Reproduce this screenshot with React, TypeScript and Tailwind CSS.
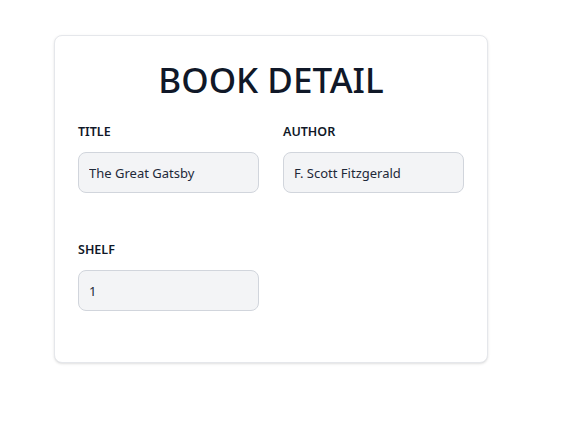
import React from 'react';

const Field: React.FC<{ label: string; value: string }> = ({ label, value }) => {
    return (
        <div className="flex flex-col">
            <label className="text-[12.5px] font-semibold text-gray-900 mb-[10px] leading-5">{label}</label>
            <input
                readOnly
                value={value}
                className="h-[41px] w-full rounded-lg border border-gray-300 bg-gray-100 px-[10px] text-[13px] text-gray-800 outline-none"
            />
        </div>
    );
};

const App: React.FC = () => {
    return (
        <div className="min-h-screen bg-white pt-[35px] pl-[54px]" style={{ fontFamily: '"Noto Sans", "Open Sans", sans-serif' }}>
            <div className="w-[434px] rounded-lg border border-gray-200 bg-white shadow-sm px-[23px] pt-6 pb-[51px]">
                <h1 className="text-center text-[35px] leading-10 font-medium text-gray-900 mb-[22px]">BOOK DETAIL</h1>
                <div className="grid grid-cols-2 gap-x-6 gap-y-[47px]">
                    <Field label="TITLE" value="The Great Gatsby" />
                    <Field label="AUTHOR" value="F. Scott Fitzgerald" />
                    <Field label="SHELF" value="1" />
                </div>
            </div>
        </div>
    );
};

export default App;
